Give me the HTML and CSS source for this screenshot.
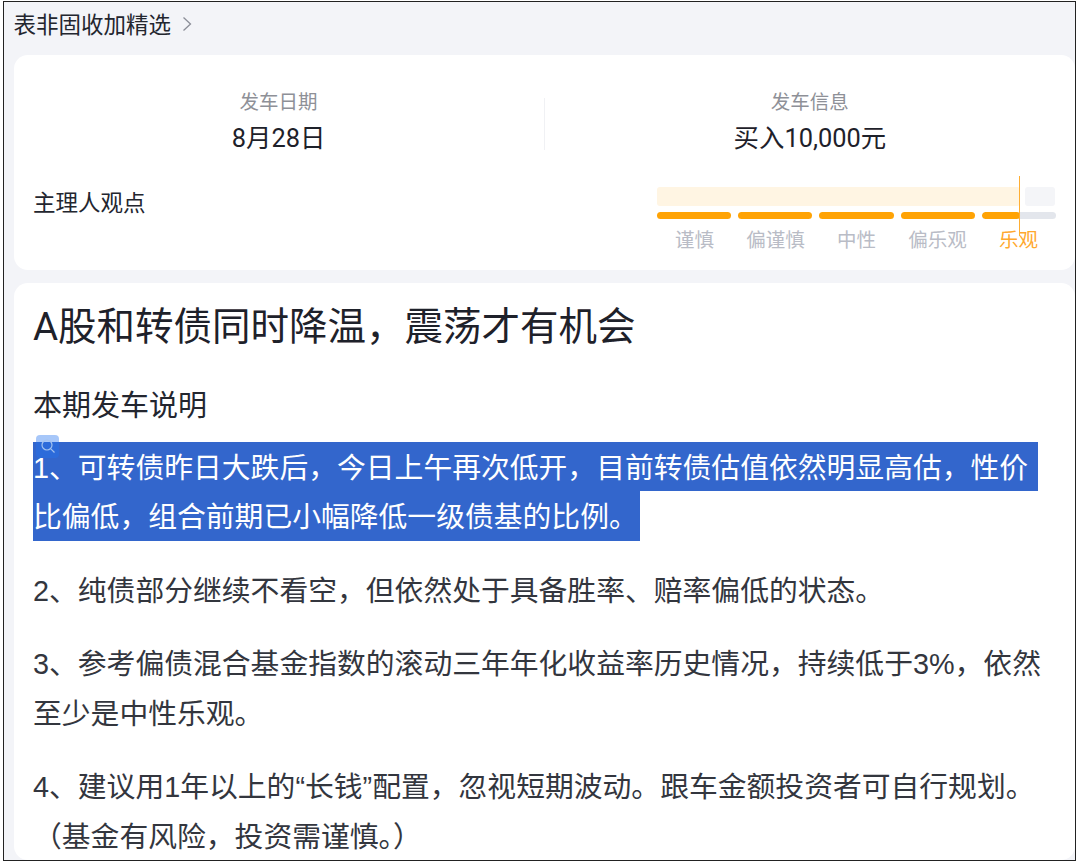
FILE: index.html
```html
<!DOCTYPE html>
<html lang="zh-CN">
<head>
<meta charset="utf-8">
<title>表非固收加精选</title>
<link rel="stylesheet" href="styles.css">
</head>
<body>
<div class="frame">
  <header class="crumb">
    <span>表非固收加精选</span>
    <svg class="chev" width="10" height="16" viewBox="0 0 10 16"><path d="M1.5 1.5 8.5 8 1.5 14.5" fill="none" stroke="#8b8e98" stroke-width="1.3"/></svg>
  </header>
  <section class="card summary">
    <div class="stats">
      <div class="stat"><div class="stat-label">发车日期</div><div class="stat-value">8月28日</div></div>
      <div class="divider"></div>
      <div class="stat"><div class="stat-label">发车信息</div><div class="stat-value">买入10,000元</div></div>
    </div>
    <div class="view">
      <div class="view-title">主理人观点</div>
      <div class="gauge">
        <div class="track-top"><div class="fill-top"></div><div class="rest-top"></div></div>
        <div class="segs">
          <i class="seg"></i><i class="seg"></i><i class="seg"></i><i class="seg"></i>
          <i class="seg last"><b class="seg-fill"></b></i>
        </div>
        <div class="labels">
          <span>谨慎</span><span>偏谨慎</span><span>中性</span><span>偏乐观</span><span class="on">乐观</span>
        </div>
        <div class="marker"></div>
      </div>
    </div>
  </section>
  <section class="card article">
    <h1>A股和转债同时降温，震荡才有机会</h1>
    <p class="sub">本期发车说明</p>
    <div class="sel-wrap">
      <div class="search-badge"><svg width="16" height="16" viewBox="0 0 16 16"><circle cx="7" cy="7" r="5" fill="none" stroke="#a3c2ee" stroke-width="1.2"/><path d="M10.8 10.8 14.5 14.5" stroke="#a3c2ee" stroke-width="1.2"/></svg></div>
      <p class="sel-line first">1、可转债昨日大跌后，今日上午再次低开，目前转债估值依然明显高估，性价</p>
      <p class="sel-line second">比偏低，组合前期已小幅降低一级债基的比例。</p>
    </div>
    <p class="para">2、纯债部分继续不看空，但依然处于具备胜率、赔率偏低的状态。</p>
    <p class="para">3、参考偏债混合基金指数的滚动三年年化收益率历史情况，持续低于3%，依然至少是中性乐观。</p>
    <p class="para">4、建议用1年以上的“长钱”配置，忽视短期波动。跟车金额投资者可自行规划。（基金有风险，投资需谨慎。）</p>
  </section>
</div>
</body>
</html>
```
FILE: styles.css
```css
* { box-sizing: border-box; }
html, body { margin: 0; height: 866px; background: #fff; overflow: hidden; }
body { padding: 1px 4px 5px 3px; font-family: "Liberation Sans", "Noto Sans CJK SC", sans-serif; color: #23262f; }
.frame { height: 860px; border: 1.5px solid #222; background: #f3f4f8; overflow: hidden; display: flex; flex-direction: column; padding-left: 9.5px; }
.crumb { height: 52.5px; flex: none; display: flex; align-items: center; gap: 11px; font-size: 22.5px; padding-bottom: 10px; color: #23262f; }
.chev { margin-top: 1px; }
.card { background: #fff; border-radius: 14px; }
.summary { height: 215px; padding: 34px 19px 0 19.5px; flex: none; }
.stats { display: flex; align-items: center; height: 70px; margin: 0 -19px 0 -19.5px; }
.stat { flex: 1; text-align: center; }
.stat-label { font-size: 19.5px; line-height: 28px; color: #8e9097; }
.stat-value { font-family: Roboto, "Noto Sans CJK SC", sans-serif; font-size: 25.4px; line-height: 44px; color: #1e212a; }
.divider { width: 1px; height: 52px; background: #f0f1f4; }
.view { display: flex; justify-content: space-between; margin-top: 28px; }
.view-title { font-size: 22.5px; line-height: 34px; }
.gauge { position: relative; width: 399px; }
.track-top { display: flex; gap: 5px; height: 19px; }
.fill-top { width: 363px; background: #fff5e3; border-radius: 3px; }
.rest-top { width: 30px; background: #f4f5f8; border-radius: 3px; }
.segs { display: flex; gap: 7px; margin-top: 6px; height: 7px; }
.seg { flex: 1; background: #ffa305; border-radius: 4px; display: block; }
.seg.last { background: #e3e6ec; overflow: hidden; }
.seg-fill { display: block; width: 38px; height: 100%; background: #ffa305; border-radius: 4px; }
.labels { display: flex; margin: 7px -3px 0; }
.labels span { flex: 1; text-align: center; font-size: 19.5px; line-height: 28px; color: #b9bcc6; }
.labels .on { color: #ffa82e; }
.marker { position: absolute; left: 362px; top: -11px; height: 60px; width: 1px; background: #ffae33; }
.article { margin-top: 13px; flex: 1; min-height: 0; padding: 13px 20px 0 19.5px; }
h1 { margin: 0; font-family: Roboto, "Noto Sans CJK SC", sans-serif; font-weight: 400; font-size: 38.5px; line-height: 62px; color: #1e212a; }
.sub { margin: 28px 0 0; font-size: 29px; line-height: 40px; color: #23262f; }
.para { margin: 0 0 24px; font-size: 28.8px; line-height: 49.5px; color: #33363e; }
.sel-wrap { position: relative; margin: 16px 0 26px; }
.sel-line { margin: 0; width: fit-content; font-size: 28.8px; line-height: 46.5px; padding-top: 3px; background: #3366cc; color: #fff; white-space: nowrap; }
.sel-line.first { padding-right: 10px; }
.sel-line.second { padding-right: 2px; }
.search-badge { position: absolute; left: 3px; top: -7px; width: 23px; height: 23px; background: rgba(35, 115, 240, 0.4); border-radius: 4px; display: flex; align-items: center; justify-content: center; }
```
